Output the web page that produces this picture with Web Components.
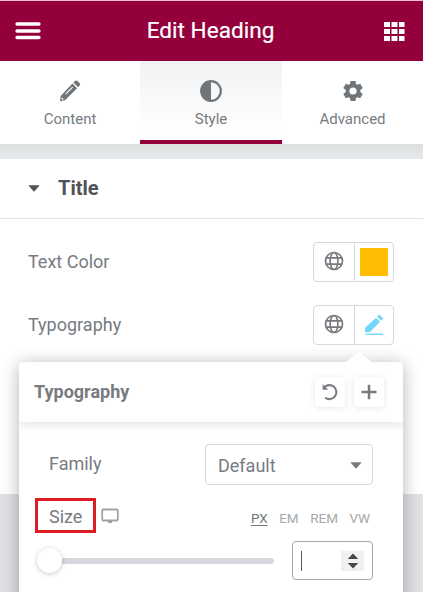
<!DOCTYPE html>
<html lang="en">
<head>
<meta charset="utf-8">
<title>Edit Heading</title>
<style>
  html, body {
    margin: 0;
    height: 100%;
    overflow: hidden;
  }

  body {
    font-family: Roboto, 'Liberation Sans', sans-serif;
    color: #777b7f;
    background: #dfe1e4;
  }
</style>
</head>
<body>
<editor-panel>
  <panel-header slot="header">Edit Heading</panel-header>
  <panel-tabs slot="tabs">
    <panel-tab icon="pencil">Content</panel-tab>
    <panel-tab icon="contrast" active>Style</panel-tab>
    <panel-tab icon="gear">Advanced</panel-tab>
  </panel-tabs>
  <panel-section heading="Title">
    <control-row label="Text Color">
      <global-picker><color-swatch></color-swatch></global-picker>
    </control-row>
    <control-row label="Typography">
      <global-picker><ui-icon name="edit"></ui-icon></global-picker>
    </control-row>
  </panel-section>
  <typography-popover slot="popover" heading="Typography">
    <select-control label="Family" value="Default"></select-control>
    <size-control label="Size"></size-control>
  </typography-popover>
</editor-panel>

<script>
const ICONS = {
  menu: [26, 18, '<path fill="none" stroke="#fff" stroke-width="3.3" stroke-linecap="round" d="M2 2h22M2 9h22M2 15.500h22"/>'],
  apps: [21, 19, '<path fill="currentColor" d="M0 0h6v5H0zM7.5 0h6v5h-6zM15 0h5.5v5H15zM0 7h6v5H0zM7.5 7h6v5h-6zM15 7h5.5v5H15zM0 14h6v5H0zM7.5 14h6v5h-6zM15 14h5.5v5H15z"/>'],
  pencil: [22, 22, '<g fill="currentColor"><path d="M14.4 2.6l1.600-1.600c.8-.7 1.800-.7 2.600 0l2 2.200c.7.8.7 1.600 0 2.400l-1.600 1.600z"/><path fill-rule="evenodd" d="M13.400 3.600l4.700 4.700L6 20.300l-5 .9.7-5.300zM6.300 13.700l.8.8 6.900-6.900-.8-.8zM2.800 17.300l-.3 1.700.8.800 1.600-.3z"/></g>'],
  contrast: [22, 22, '<circle cx="11" cy="11" r="9.8" fill="none" stroke="currentColor" stroke-width="2.2"/><path fill="currentColor" d="M11 1v20A10 10 0 0 1 11 1z"/>'],
  gear: [22, 22, '<g fill="currentColor"><path fill-rule="evenodd" d="M8.500 1h5l.5 3 1.400.8 2.800-1.100 2.500 4.200-2.400 2v2.200l2.400 2-2.500 4.200-2.800-1.100-1.400.8-.5 3h-5L8 18l-1.400-.8-2.800 1.100-2.500-4.200 2.400-2V9.900l-2.400-2 2.500-4.200 2.800 1.100L8 4zM11 7.400a3.600 3.600 0 1 0 0 7.200 3.600 3.600 0 0 0 0-7.200z"/></g>'],
  globe: [20, 20, '<g fill="none" stroke="currentColor" stroke-width="1.7"><circle cx="10" cy="10" r="8.5"/><ellipse cx="10" cy="10" rx="3.9" ry="8.500"/><path d="M2.200 6.900h15.600M2.200 13.100h15.600"/></g>'],
  edit: [20, 22, '<g fill="#71d7f7"><path d="M12.100 3.700l3.900 4.100L6 17.900l-5 .3.3-4.700z"/><path d="M13.200 2.500L15.300.5l3.900 3.900-2.100 2.300z"/><path d="M1.500 19.500h17.500v1.400H1.500z"/></g>'],
  undo: [18, 18, '<path fill="none" stroke="currentColor" stroke-width="2.100" d="M3.200 4.400A7 7 0 1 1 4.200 14.700"/><path fill="currentColor" d="M1.600 1v5.800h5.600z"/>'],
  plus: [16, 16, '<path fill="none" stroke="currentColor" stroke-width="2.500" d="M8 .7v14.600M.5 8h15"/>'],
  monitor: [18, 16, '<rect x="1.200" y="1.500" width="15.600" height="11" rx="1.200" fill="none" stroke="currentColor" stroke-width="1.800"/><path fill="currentColor" d="M7 13h4v2H7z"/>'],
  caret: [12, 7, '<path fill="currentColor" d="M.3.300h11.400L6 6.700z"/>'],
  spinner: [12, 16, '<path fill="#45484b" d="M6 .500L11.200 6H.8zM6 15.500L.8 10h10.400z"/>']
};

class BaseElement extends HTMLElement {
  connectedCallback() {
    this.attachShadow({ mode: 'open' });
    this.shadowRoot.innerHTML = this.render();
  }
}

class UiIcon extends BaseElement {
  render() {
    const [w, h, body] = ICONS[this.getAttribute('name')];
    return `
      <style>
        :host { display: block; flex: none; }
        svg { display: block; }
      </style>
      <svg width="${w}" height="${h}" viewBox="0 0 ${w} ${h}">${body}</svg>
    `;
  }
}

class EditorPanel extends BaseElement {
  render() {
    return `
      <style>
        :host {
          display: flex;
          flex-direction: column;
          position: relative;
          height: 494px;
          background: linear-gradient(#dcdedf, #e6e9eb 13px) 0 144px / 100% 15px no-repeat;
        }
      </style>
      <slot name="header"></slot>
      <slot name="tabs"></slot>
      <slot></slot>
      <slot name="popover"></slot>
    `;
  }
}

class PanelHeader extends BaseElement {
  render() {
    return `
      <style>
        :host {
          display: flex;
          align-items: center;
          justify-content: space-between;
          box-sizing: border-box;
          height: 61px;
          padding: 0 18px 0 15px;
          border-top: 1px solid #e7bfd0;
          background: #93003c;
          color: #fff;
        }
        .title {
          font-size: 22.6px;
          line-height: 28px;
          padding: 0 4px 1px 0;
          -webkit-text-stroke: .2px #fff;
        }
      </style>
      <ui-icon name="menu"></ui-icon>
      <div class="title"><slot></slot></div>
      <ui-icon name="apps"></ui-icon>
    `;
  }
}

class PanelTabs extends BaseElement {
  render() {
    return `
      <style>
        :host {
          display: grid;
          grid-template-columns: 140px 142px 1fr;
          height: 83px;
          background: #fff;
        }
      </style>
      <slot></slot>
    `;
  }
}

class PanelTab extends BaseElement {
  render() {
    return `
      <style>
        :host {
          display: flex;
          flex-direction: column;
          align-items: center;
          gap: 7px;
          box-sizing: border-box;
          padding-top: 19px;
          font-size: 15px;
          line-height: 20px;
        }
        :host([active]) {
          background: linear-gradient(#f1f2f4, #fff 90%);
          border-bottom: 4px solid #93003c;
        }
        ui-icon { color: #70757a; }
      </style>
      <ui-icon name="${this.getAttribute('icon')}"></ui-icon>
      <span><slot></slot></span>
    `;
  }
}

class PanelSection extends BaseElement {
  render() {
    return `
      <style>
        :host {
          display: block;
          flex: 1;
          margin-top: 15px;
          background: #fff;
        }
        .heading {
          display: flex;
          align-items: center;
          gap: 18px;
          height: 59px;
          padding-left: 28px;
          border-bottom: 1px solid #e0e2e4;
          font-size: 20px;
          font-weight: 700;
          color: #505356;
        }
        .heading span { padding-bottom: 2px; }
        .body {
          display: flex;
          flex-direction: column;
          gap: 23px;
          padding: 23px 29px 0 28px;
        }
      </style>
      <div class="heading"><ui-icon name="caret"></ui-icon><span>${this.getAttribute('heading')}</span></div>
      <div class="body"><slot></slot></div>
    `;
  }
}

class ControlRow extends BaseElement {
  render() {
    return `
      <style>
        :host {
          display: flex;
          align-items: center;
          justify-content: space-between;
          height: 40px;
          font-size: 18px;
        }
        span { padding-bottom: 2px; }
      </style>
      <span>${this.getAttribute('label')}</span>
      <slot></slot>
    `;
  }
}

class GlobalPicker extends BaseElement {
  render() {
    return `
      <style>
        :host {
          display: grid;
          grid-template-columns: 40px 1fr;
          box-sizing: border-box;
          width: 81px;
          height: 40px;
          border: 1px solid #d5d8dc;
          border-radius: 4px;
        }
        div {
          display: flex;
          align-items: center;
          justify-content: center;
        }
        .global { padding-bottom: 2px; }
        .value { border-left: 1px solid #d5d8dc; }
      </style>
      <div class="global"><ui-icon name="globe"></ui-icon></div>
      <div class="value"><slot></slot></div>
    `;
  }
}

class ColorSwatch extends BaseElement {
  render() {
    return `
      <style>
        :host {
          display: block;
          width: 28px;
          height: 28px;
          background: #ffbc00;
        }
      </style>
    `;
  }
}

class TypographyPopover extends BaseElement {
  render() {
    return `
      <style>
        :host {
          display: block;
          position: absolute;
          top: 362px;
          left: 19px;
          width: 384px;
          height: 250px;
          background: #fff;
          border-radius: 4px;
          box-shadow: 0 2px 17px rgba(0, 0, 0, .3);
        }
        .arrow {
          position: absolute;
          top: -10px;
          right: 31px;
          border: 13px solid transparent;
          border-top: 0;
          border-bottom: 10px solid #fff;
        }
        header {
          display: flex;
          align-items: center;
          gap: 9px;
          box-sizing: border-box;
          height: 60px;
          padding: 0 19px 0 15px;
          font-size: 18px;
          font-weight: 700;
          border-radius: 4px 4px 0 0;
          box-shadow: 0 4px 8px rgba(0, 0, 0, .09);
          clip-path: inset(0 0 -20px 0);
        }
        h2 {
          flex: 1;
          margin: 0;
          padding-bottom: 2px;
          font: inherit;
        }
        .button {
          display: flex;
          align-items: center;
          justify-content: center;
          width: 30px;
          height: 30px;
          border-radius: 4px;
          box-shadow: 0 1px 7px rgba(0, 0, 0, .1);
        }
        .body {
          display: flex;
          flex-direction: column;
          padding: 22px 30px 0;
        }
      </style>
      <div class="arrow"></div>
      <header>
        <h2>${this.getAttribute('heading')}</h2>
        <div class="button"><ui-icon name="undo"></ui-icon></div>
        <div class="button"><ui-icon name="plus"></ui-icon></div>
      </header>
      <div class="body"><slot></slot></div>
    `;
  }
}

class SelectControl extends BaseElement {
  render() {
    return `
      <style>
        :host {
          display: flex;
          justify-content: space-between;
          height: 41px;
          font-size: 18px;
          line-height: 40px;
        }
        .select {
          display: flex;
          align-items: center;
          justify-content: space-between;
          box-sizing: border-box;
          width: 168px;
          padding: 2px 10px 0 12px;
          border: 1px solid #d5d8dc;
          border-radius: 4px;
        }
      </style>
      <span>${this.getAttribute('label')}</span>
      <div class="select">${this.getAttribute('value')}<ui-icon name="caret"></ui-icon></div>
    `;
  }
}

class SizeControl extends BaseElement {
  render() {
    return `
      <style>
        :host { display: block; }
        .top {
          display: flex;
          align-items: center;
          height: 35px;
          margin: 13px 3px 0 -14px;
        }
        .label {
          box-sizing: border-box;
          width: 61px;
          height: 35px;
          margin-right: 5px;
          padding-left: 11px;
          border: 3px solid #dc1c24;
          font-size: 18px;
          line-height: 31px;
        }
        ui-icon { color: #a0a3a6; }
        .units {
          display: flex;
          gap: 11.5px;
          margin-left: auto;
          padding-top: 5px;
          font-size: 13.5px;
          line-height: 17px;
          color: #a4a8ac;
        }
        .units .on {
          color: #72777c;
          text-decoration: underline;
          text-underline-offset: 2px;
        }
        .bottom {
          display: flex;
          align-items: center;
          gap: 18px;
          margin: 8px 0 0 -12px;
        }
        .track {
          display: flex;
          align-items: center;
          flex: 1;
          height: 6px;
          border-radius: 3px;
          background: #d5d8dc;
        }
        .thumb {
          width: 25px;
          height: 25px;
          border-radius: 50%;
          background: #fff;
          box-shadow: 0 1px 5px rgba(0, 0, 0, .22);
        }
        .number {
          display: flex;
          align-items: center;
          justify-content: space-between;
          box-sizing: border-box;
          width: 81px;
          height: 39px;
          padding: 0 8px;
          border: 1px solid #a4a8ac;
          border-radius: 4px;
        }
        .cursor {
          width: 1px;
          height: 20px;
          background: #55595c;
        }
        .spin {
          display: flex;
          align-items: center;
          justify-content: center;
          width: 23px;
          height: 20px;
          background: #f0f0f0;
        }
      </style>
      <div class="top">
        <div class="label">${this.getAttribute('label')}</div>
        <ui-icon name="monitor"></ui-icon>
        <div class="units"><span class="on">PX</span><span>EM</span><span>REM</span><span>VW</span></div>
      </div>
      <div class="bottom">
        <div class="track"><div class="thumb"></div></div>
        <div class="number">
          <div class="cursor"></div>
          <div class="spin"><ui-icon name="spinner"></ui-icon></div>
        </div>
      </div>
    `;
  }
}

customElements.define('ui-icon', UiIcon);
customElements.define('editor-panel', EditorPanel);
customElements.define('panel-header', PanelHeader);
customElements.define('panel-tabs', PanelTabs);
customElements.define('panel-tab', PanelTab);
customElements.define('panel-section', PanelSection);
customElements.define('control-row', ControlRow);
customElements.define('global-picker', GlobalPicker);
customElements.define('color-swatch', ColorSwatch);
customElements.define('typography-popover', TypographyPopover);
customElements.define('select-control', SelectControl);
customElements.define('size-control', SizeControl);
</script>
</body>
</html>
